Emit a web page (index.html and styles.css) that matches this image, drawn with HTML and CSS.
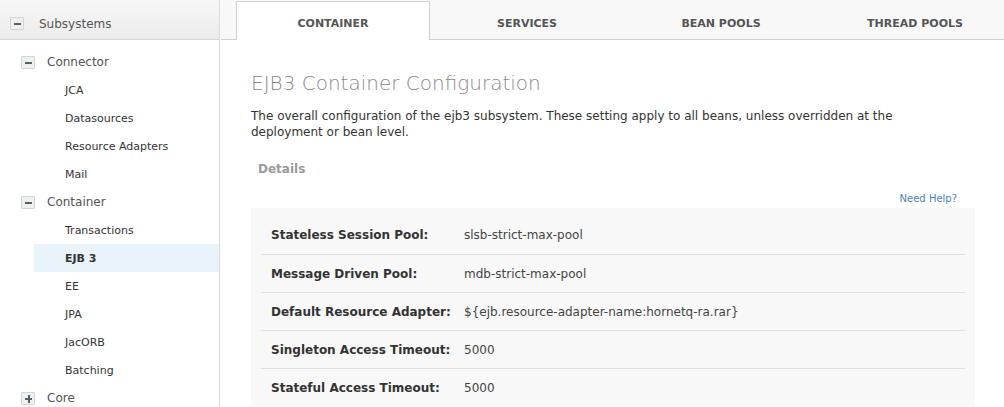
FILE: index.html
```html
<!DOCTYPE html>
<html>
<head>
<meta charset="utf-8">
<link rel="stylesheet" href="styles.css">
</head>
<body>
<div class="app">
  <aside class="sidebar">
    <div class="side-head">
      <span class="toggle minus"></span>
      <span class="head-label">Subsystems</span>
    </div>
    <ul class="tree">
      <li class="group"><span class="toggle minus"></span><span>Connector</span></li>
      <li class="leaf">JCA</li>
      <li class="leaf">Datasources</li>
      <li class="leaf">Resource Adapters</li>
      <li class="leaf">Mail</li>
      <li class="group"><span class="toggle minus"></span><span>Container</span></li>
      <li class="leaf">Transactions</li>
      <li class="leaf selected">EJB 3</li>
      <li class="leaf">EE</li>
      <li class="leaf">JPA</li>
      <li class="leaf">JacORB</li>
      <li class="leaf">Batching</li>
      <li class="group"><span class="toggle plus"></span><span>Core</span></li>
    </ul>
  </aside>
  <main class="main">
    <nav class="tabs">
      <div class="tab active">CONTAINER</div>
      <div class="tab">SERVICES</div>
      <div class="tab">BEAN POOLS</div>
      <div class="tab">THREAD POOLS</div>
    </nav>
    <section class="content">
      <h1 class="title">EJB3 Container Configuration</h1>
      <p class="desc">The overall configuration of the ejb3 subsystem. These setting apply to all beans, unless overridden at the deployment or bean level.</p>
      <h2 class="details">Details</h2>
      <div class="help-row"><a class="help">Need Help?</a></div>
      <div class="panel">
        <div class="row"><span class="label">Stateless Session Pool:</span><span class="value">slsb-strict-max-pool</span></div>
        <div class="row"><span class="label">Message Driven Pool:</span><span class="value">mdb-strict-max-pool</span></div>
        <div class="row"><span class="label">Default Resource Adapter:</span><span class="value">${ejb.resource-adapter-name:hornetq-ra.rar}</span></div>
        <div class="row"><span class="label">Singleton Access Timeout:</span><span class="value">5000</span></div>
        <div class="row"><span class="label">Stateful Access Timeout:</span><span class="value">5000</span></div>
      </div>
    </section>
  </main>
</div>
</body>
</html>
```

FILE: styles.css
```css
* { box-sizing: border-box; }
html, body { margin: 0; padding: 0; height: 100%; overflow: hidden; }
body {
  font-family: "DejaVu Sans", sans-serif;
  background: #fff;
  color: #333;
}
.app { display: flex; height: 407px; }

.sidebar {
  width: 220px;
  flex: none;
  border-right: 1px solid #d9d9d9;
}
.side-head {
  height: 40px;
  display: flex;
  align-items: center;
  padding-left: 10px;
  padding-top: 8px;
  background: linear-gradient(#f7f7f7, #ececec);
  border-bottom: 1px solid #d6d6d6;
  font-size: 12px;
  color: #555;
}
.head-label { margin-left: 15px; }

.toggle {
  width: 14px;
  height: 13px;
  flex: none;
  border: 1px solid #d4d4d4;
  background: #efefef;
  border-radius: 1px;
  position: relative;
}
.toggle::before {
  content: "";
  position: absolute;
  left: 3px;
  top: 5px;
  width: 7px;
  height: 2px;
  background: #555f66;
}
.toggle.plus::after {
  content: "";
  position: absolute;
  left: 5.5px;
  top: 2px;
  width: 2px;
  height: 8px;
  background: #555f66;
}

.tree {
  list-style: none;
  margin: 0;
  padding: 8px 0 0 0;
  font-size: 11px;
  color: #333;
}
.tree li {
  height: 28px;
  display: flex;
  align-items: center;
}
.group { padding-left: 21px; color: #555; font-size: 12px; }
.group .toggle + span { margin-left: 12px; }
.leaf { padding-left: 65px; }
.leaf.selected {
  margin-left: 34px;
  padding-left: 31px;
  background: #e8f3fa;
  font-weight: bold;
}

.main { flex: 1; min-width: 0; padding-left: 1px; }
.tabs {
  height: 40px;
  background: #f8f8f8;
  border-bottom: 1px solid #d0d0d0;
  display: flex;
  padding-left: 15px;
  padding-top: 1px;
  white-space: nowrap;
}
.tab {
  flex: none;
  width: 194px;
  height: 39px;
  display: flex;
  align-items: center;
  justify-content: center;
  font-size: 11px;
  font-weight: bold;
  color: #555;
  padding-top: 5px;
}
.tab.active {
  background: #fff;
  border: 1px solid #d0d0d0;
  border-bottom: none;
  height: 39px;
}

.content { padding: 30px 30px 0 30px; }
.title {
  margin: 0;
  font-size: 20px;
  font-weight: 200;
  color: #8a8a8a;
  line-height: 26px;
}
.desc {
  margin: 12px 0 0 0;
  font-size: 12px;
  line-height: 16px;
  color: #333;
  max-width: 680px;
}
.details {
  margin: 21px 0 0 7px;
  font-size: 12px;
  font-weight: bold;
  color: #9a9a9a;
  line-height: 16px;
}
.help-row {
  display: flex;
  justify-content: flex-end;
  padding-right: 17px;
  margin-top: 15px;
  line-height: 14px;
}
.help { font-size: 10px; color: #4a7fbf; }
.panel {
  margin-top: 2px;
  width: 724px;
  background: #f8f8f8;
  padding: 8px 10px 0 10px;
}
.row {
  height: 38px;
  display: flex;
  align-items: center;
  border-top: 1px solid #e0e0e0;
  font-size: 12px;
}
.row:first-child { border-top: none; height: 38px; }
.label { width: 203px; padding-left: 10px; font-weight: bold; color: #333; flex: none; }
.value { color: #444; }
```
